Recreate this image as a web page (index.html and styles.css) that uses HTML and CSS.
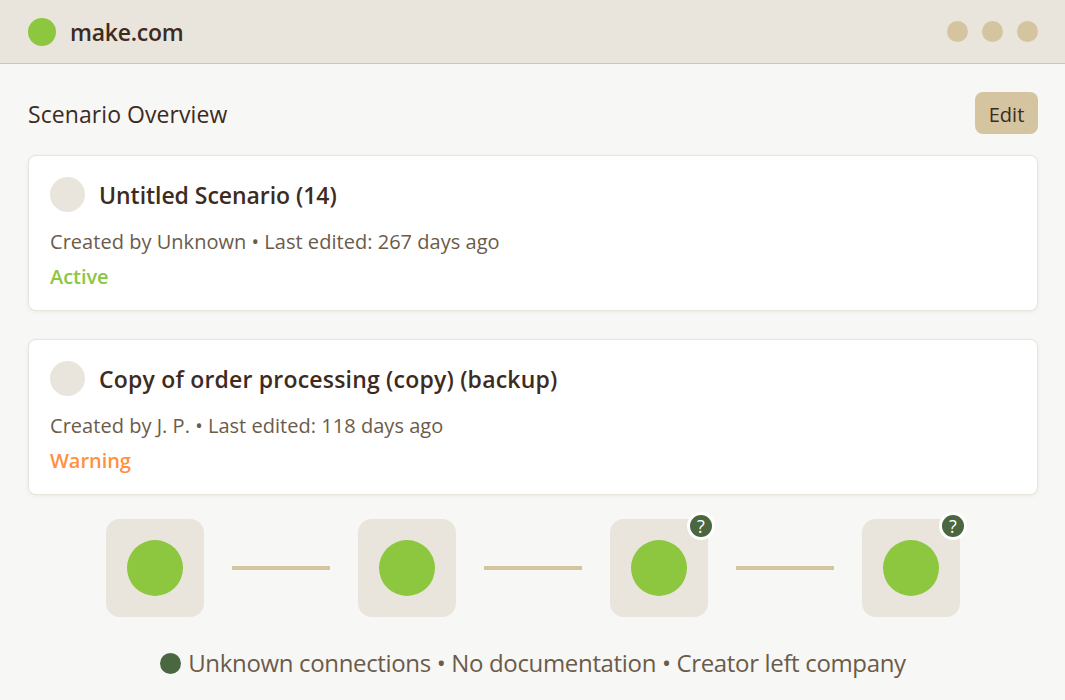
FILE: index.html
```html
<!DOCTYPE html>
<html lang="en">
<head>
<meta charset="utf-8">
<title>make.com</title>
<link rel="stylesheet" href="styles.css">
</head>
<body>
<header class="topbar">
  <div class="brand"><span class="brand-dot"></span><span class="brand-name">make.com</span></div>
  <div class="controls"><span class="control"></span><span class="control"></span><span class="control"></span></div>
</header>
<main class="content">
  <div class="overview">
    <h1 class="overview-title">Scenario Overview</h1>
    <button class="edit">Edit</button>
  </div>
  <section class="card">
    <div class="card-head"><span class="avatar"></span><h2 class="card-title">Untitled Scenario (14)</h2></div>
    <p class="meta">Created by Unknown • Last edited: 267 days ago</p>
    <p class="status status-active">Active</p>
  </section>
  <section class="card">
    <div class="card-head"><span class="avatar"></span><h2 class="card-title card-title-long">Copy of order processing (copy) (backup)</h2></div>
    <p class="meta">Created by J. P. • Last edited: 118 days ago</p>
    <p class="status status-warning">Warning</p>
  </section>
  <div class="flow">
    <div class="node"><span class="node-dot"></span></div>
    <span class="link"></span>
    <div class="node"><span class="node-dot"></span></div>
    <span class="link"></span>
    <div class="node"><span class="node-dot"></span><span class="badge">?</span></div>
    <span class="link"></span>
    <div class="node"><span class="node-dot"></span><span class="badge">?</span></div>
  </div>
  <div class="legend"><span class="legend-dot"></span><span>Unknown connections • No documentation • Creator left company</span></div>
</main>
</body>
</html>
```
FILE: styles.css
```css
* { box-sizing: border-box; }
html, body { margin: 0; padding: 0; }
body {
  width: 1065px;
  height: 700px;
  overflow: hidden;
  background: #f7f7f5;
  color: #3d2b1f;
  font-family: "Open Sans", "Noto Sans", sans-serif;
}
.topbar {
  height: 64px;
  background: #e9e5dd;
  border-bottom: 1px solid #d4c4a0;
  padding: 0 27px 0 28px;
  display: flex;
  align-items: center;
  justify-content: space-between;
}
.brand { display: flex; align-items: center; gap: 14px; }
.brand-dot { width: 28px; height: 28px; border-radius: 50%; background: #8dc63f; }
.brand-name { font-size: 23px; font-weight: 600; letter-spacing: -0.25px; }
.controls { display: flex; gap: 14px; }
.control { width: 21px; height: 21px; border-radius: 50%; background: #d4c4a0; }
.content { padding: 28px 27px 0 28px; }
.overview { display: flex; align-items: center; justify-content: space-between; height: 42px; margin-bottom: 21px; }
.overview-title { margin: 0; padding-top: 2px; font-size: 23px; font-weight: 400; letter-spacing: 0.07px; }
.edit {
  width: 63px;
  height: 42px;
  padding: 2px 0 0;
  border: 0;
  border-radius: 8px;
  background: #d4c4a0;
  color: #3d2b1f;
  font: inherit;
  font-size: 20px;
}
.card {
  height: 156px;
  margin-bottom: 28px;
  padding: 21px;
  background: #fff;
  border: 1px solid #e9e5dd;
  border-radius: 8px;
  box-shadow: 0 1px 4px rgba(0, 0, 0, 0.06);
}
.card-head { display: flex; align-items: center; gap: 14px; height: 35px; margin-bottom: 16px; }
.avatar { width: 35px; height: 35px; border-radius: 50%; background: #e9e5dd; }
.card-title { margin: 0; font-size: 23px; font-weight: 600; letter-spacing: -0.05px; }
.card-title-long { letter-spacing: 0.2px; }
.meta { margin: 0 0 7px; font-size: 20px; line-height: 28px; color: #6b5b4a; letter-spacing: 0.03px; }
.status { margin: 0; font-size: 20px; line-height: 28px; font-weight: 600; letter-spacing: -0.05px; }
.status-active { color: #8dc63f; }
.status-warning { color: #ff9142; }
.flow { display: flex; align-items: center; justify-content: center; gap: 28px; margin-top: -4px; height: 98px; }
.node {
  position: relative;
  width: 98px;
  height: 98px;
  border-radius: 14px;
  background: #e9e5dd;
  display: flex;
  align-items: center;
  justify-content: center;
}
.node-dot { width: 56px; height: 56px; border-radius: 50%; background: #8dc63f; }
.link { width: 98px; height: 4px; background: #d4c4a0; }
.badge {
  position: absolute;
  top: -7px;
  right: -7px;
  width: 28px;
  height: 28px;
  border: 3px solid #fff;
  border-radius: 50%;
  background: #4a6741;
  color: #fff;
  font-size: 18px;
  font-weight: 500;
  display: flex;
  align-items: center;
  justify-content: center;
}
.legend {
  margin-top: 28px;
  display: flex;
  align-items: center;
  justify-content: center;
  gap: 7px;
  font-size: 24px;
  line-height: 36px;
  color: #6b5b4a;
  letter-spacing: -0.34px;
}
.legend-dot { width: 21px; height: 21px; border-radius: 50%; background: #4a6741; }
```
